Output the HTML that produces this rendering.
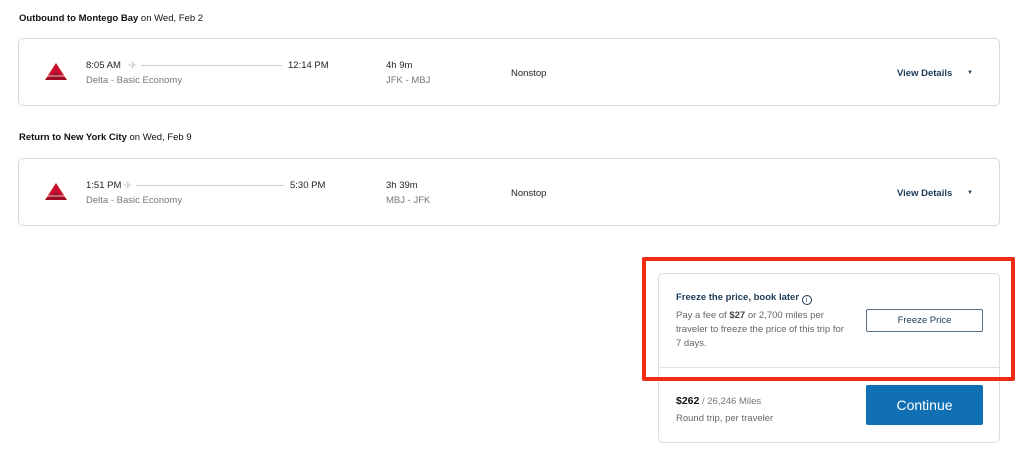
<!DOCTYPE html>
<html><head><style>
*{margin:0;padding:0;box-sizing:border-box}
body{width:1024px;height:469px;background:#fff;font-family:"Liberation Sans",sans-serif;color:#222;position:relative;overflow:hidden}
.a{position:absolute;white-space:nowrap}
.h{font-size:9.5px;color:#111}
.card{position:absolute;left:18px;width:982px;height:68px;border:1px solid #d8d8d8;border-radius:5px}
.t{font-size:9.5px;color:#222}
.g{font-size:9.5px;color:#777}
.vd{font-size:9.5px;font-weight:bold;color:#1d3b57}
</style></head><body>
<div class="a h" style="left:19px;top:13px"><b>Outbound to Montego Bay</b> on Wed, Feb 2</div>
<div class="card" style="top:38px"></div>
<div class="a h" style="left:19px;top:132px"><b>Return to New York City</b> on Wed, Feb 9</div>
<div class="card" style="top:158px"></div>

<div style="position:absolute;left:0;top:0">
<svg class="a" style="left:45px;top:63px" width="22" height="18" viewBox="0 0 22 18"><polygon points="11,0 22,17 0,17" fill="#c8102e"/><polygon points="11,9 22,17 0,17" fill="#9b0d22"/><line x1="2" y1="13" x2="20" y2="13" stroke="#fff" stroke-width="0.8"/></svg>
<div class="a t" style="left:86px;top:60px">8:05 AM</div>
<div class="a g" style="left:86px;top:75px">Delta - Basic Economy</div>
<div class="a" style="left:128px;top:59px;color:#ccc;font-size:11px">✈</div>
<div class="a" style="left:141px;top:65px;width:141px;height:1px;background:#ccc"></div>
<div class="a t" style="left:288px;top:60px">12:14 PM</div>
<div class="a t" style="left:386px;top:60px">4h 9m</div>
<div class="a g" style="left:386px;top:75px">JFK - MBJ</div>
<div class="a t" style="left:511px;top:68px">Nonstop</div>
<div class="a vd" style="left:897px;top:68px">View Details</div>
<div class="a" style="left:967px;top:70px;font-size:6px;color:#1d3b57">▼</div>
</div>
<div style="position:absolute;left:0;top:120px;width:1024px;height:120px">
<svg class="a" style="left:45px;top:63px" width="22" height="18" viewBox="0 0 22 18"><polygon points="11,0 22,17 0,17" fill="#c8102e"/><polygon points="11,9 22,17 0,17" fill="#9b0d22"/><line x1="2" y1="13" x2="20" y2="13" stroke="#fff" stroke-width="0.8"/></svg>
<div class="a t" style="left:86px;top:60px">1:51 PM</div>
<div class="a g" style="left:86px;top:75px">Delta - Basic Economy</div>
<div class="a" style="left:123px;top:59px;color:#ccc;font-size:11px">✈</div>
<div class="a" style="left:136px;top:65px;width:148px;height:1px;background:#ccc"></div>
<div class="a t" style="left:290px;top:60px">5:30 PM</div>
<div class="a t" style="left:386px;top:60px">3h 39m</div>
<div class="a g" style="left:386px;top:75px">MBJ - JFK</div>
<div class="a t" style="left:511px;top:68px">Nonstop</div>
<div class="a vd" style="left:897px;top:68px">View Details</div>
<div class="a" style="left:967px;top:70px;font-size:6px;color:#1d3b57">▼</div>
</div>

<div class="a" style="left:658px;top:273px;width:342px;height:170px;border:1px solid #ddd;border-radius:5px"></div>
<div class="a" style="left:659px;top:367px;width:340px;height:1px;background:#e2e2e2"></div>
<div class="a" style="left:642px;top:257px;width:373px;height:124px;border:4px solid #f02a14;border-radius:2px"></div>
<div class="a" style="left:676px;top:292px;font-size:9.5px;font-weight:bold;color:#1d3b57">Freeze the price, book later <span style="display:inline-block;width:10px;height:10px;border:1px solid #1d3b57;border-radius:50%;font-size:7px;text-align:center;line-height:9px;font-weight:normal;vertical-align:-2px">i</span></div>
<div class="a" style="left:676px;top:309px;font-size:9.5px;color:#666;line-height:14px;white-space:normal;width:174px">Pay a fee of <b style="color:#444">$27</b> or 2,700 miles per traveler to freeze the price of this trip for 7 days.</div>
<div class="a" style="left:866px;top:309px;width:117px;height:23px;border:1px solid #5a6f80;border-radius:2px;font-size:9.5px;color:#1d3b57;text-align:center;line-height:21px">Freeze Price</div>
<div class="a" style="left:676px;top:395px;font-size:9.5px;color:#777"><b style="color:#111;font-size:10.5px">$262</b> / 26,246 Miles</div>
<div class="a" style="left:676px;top:413px;font-size:9.5px;color:#666">Round trip, per traveler</div>
<div class="a" style="left:866px;top:385px;width:117px;height:40px;background:#1170b4;border-radius:2px;color:#fff;font-size:14px;text-align:center;line-height:40px">Continue</div>
</body></html>
